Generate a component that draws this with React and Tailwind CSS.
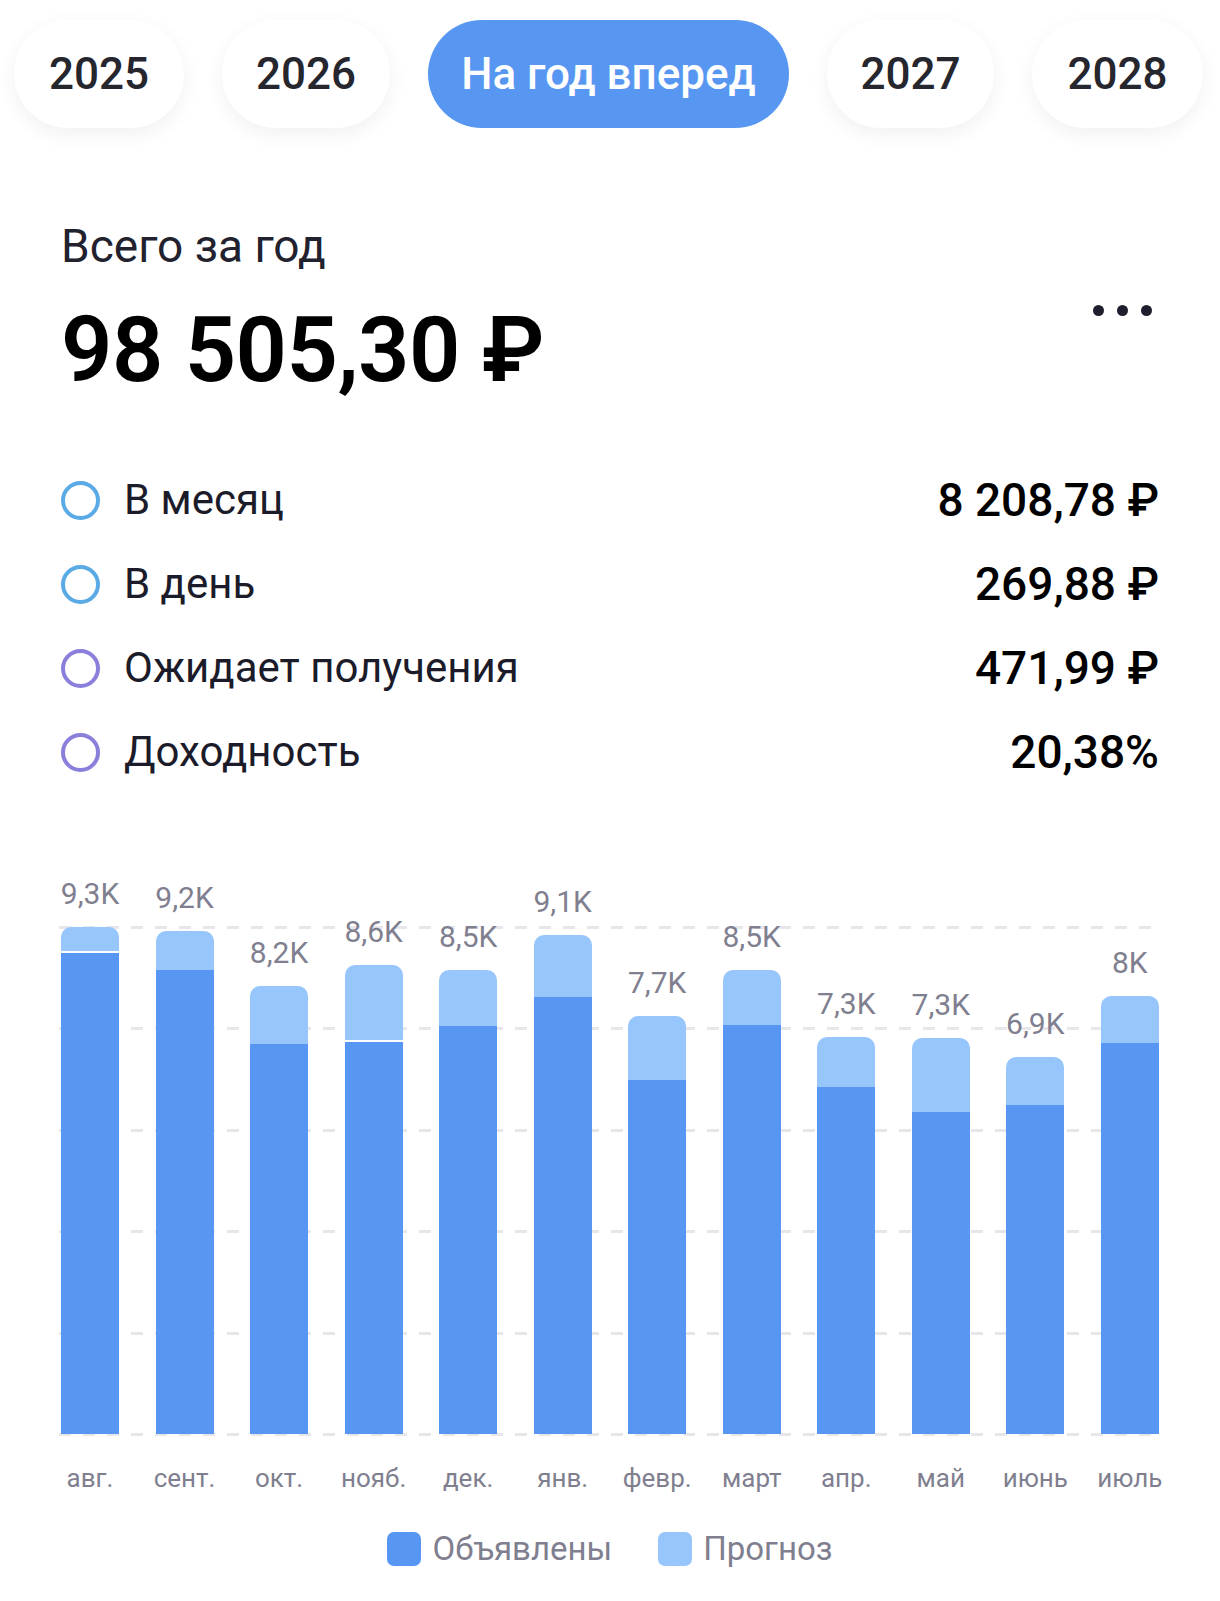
import React from 'react';

const tabs = [
  { label: '2025', w: 'w-[170px]' },
  { label: '2026', w: 'w-[168px]' },
  { label: 'На год вперед', w: 'w-[361px]', active: true },
  { label: '2027', w: 'w-[167px]' },
  { label: '2028', w: 'w-[171px]' },
];

const stats = [
  { label: 'В месяц', value: '8 208,78 ₽', ring: 'border-[#5aaae6]' },
  { label: 'В день', value: '269,88 ₽', ring: 'border-[#5aaae6]' },
  { label: 'Ожидает получения', value: '471,99 ₽', ring: 'border-[#8a80db]' },
  { label: 'Доходность', value: '20,38%', ring: 'border-[#8a80db]' },
];

// heights in px: total bar, declared part
const months = [
  { m: 'авг.', v: '9,3K', total: 507, dark: 483, split: true },
  { m: 'сент.', v: '9,2K', total: 503, dark: 464 },
  { m: 'окт.', v: '8,2K', total: 448, dark: 390 },
  { m: 'нояб.', v: '8,6K', total: 469, dark: 394, split: true },
  { m: 'дек.', v: '8,5K', total: 464, dark: 408 },
  { m: 'янв.', v: '9,1K', total: 499, dark: 437 },
  { m: 'февр.', v: '7,7K', total: 418, dark: 354 },
  { m: 'март', v: '8,5K', total: 464, dark: 409 },
  { m: 'апр.', v: '7,3K', total: 397, dark: 347 },
  { m: 'май', v: '7,3K', total: 396, dark: 322 },
  { m: 'июнь', v: '6,9K', total: 377, dark: 329 },
  { m: 'июль', v: '8K', total: 438, dark: 391 },
];

function Bar({ d }) {
  return (
    <div className="w-[58px] flex flex-col items-center">
      <div className="whitespace-nowrap text-[30px] leading-[36px] text-[#7f7f90] mb-[15px]">{d.v}</div>
      <div className="w-full flex flex-col rounded-t-[10px] overflow-hidden">
        <div className="bg-[#96c6fb]" style={{ height: d.total - d.dark }} />
        <div
          className={d.split ? 'bg-[#5796f3] border-t-2 border-white' : 'bg-[#5796f3]'}
          style={{ height: d.dark }}
        />
      </div>
    </div>
  );
}

export default function App() {
  return (
    <div className="w-[1220px] min-h-[1601px] bg-white font-['Roboto',sans-serif] text-[#1b1b2a]">
      {/* Year tabs */}
      <div className="flex gap-[38px] pt-[20px] pl-[14px]">
        {tabs.map((t) => (
          <div
            key={t.label}
            className={
              t.active
                ? `${t.w} h-[108px] rounded-full bg-[#5797f1] text-white flex items-center justify-center text-[44px] font-medium`
                : `${t.w} h-[108px] rounded-full bg-white text-[#26262e] flex items-center justify-center text-[44px] font-medium shadow-[0_6px_20px_rgba(0,0,0,0.06)]`
            }
          >
            {t.label}
          </div>
        ))}
      </div>

      <div className="px-[61px]">
        {/* Total */}
        <div className="mt-[94px] text-[46px] leading-[48px] text-[#22222e]">Всего за год</div>
        <div className="mt-[31px] flex items-start justify-between">
          <div className="text-[90px] leading-[100px] font-semibold text-black tracking-[-0.5px]">98 505,30 ₽</div>
          <div className="flex gap-[13px] mt-[4px] mr-[7px]">
            <span className="w-[11px] h-[11px] rounded-full bg-[#1e1e2e]" />
            <span className="w-[11px] h-[11px] rounded-full bg-[#1e1e2e]" />
            <span className="w-[11px] h-[11px] rounded-full bg-[#1e1e2e]" />
          </div>
        </div>

        {/* Stats */}
        <div className="mt-[57px] flex flex-col">
          {stats.map((s) => (
            <div key={s.label} className="h-[84px] flex items-center justify-between">
              <div className="flex items-center gap-[24px]">
                <span className={`w-[39px] h-[39px] rounded-full border-4 ${s.ring}`} />
                <span className="text-[42px] leading-[50px]">{s.label}</span>
              </div>
              <span className="text-[46px] leading-[50px] font-medium text-black">{s.value}</span>
            </div>
          ))}
        </div>

        {/* Chart */}
        <div className="relative mt-[56px]">
          <div className="absolute left-[-2px] right-[-2px] bottom-[-2px] h-[510px] flex flex-col justify-between">
            {[0, 1, 2, 3, 4, 5].map((i) => (
              <div
                key={i}
                className="h-[3px] bg-[repeating-linear-gradient(90deg,#e6e6eb_0_12px,transparent_12px_24px)]"
              />
            ))}
          </div>
          <div className="relative h-[584px] flex items-end justify-between">
            {months.map((d) => (
              <Bar key={d.m} d={d} />
            ))}
          </div>
        </div>

        <div className="mt-[28px] flex justify-between">
          {months.map((d) => (
            <div key={d.m} className="w-[58px] flex justify-center">
              <span className="whitespace-nowrap text-[26px] leading-[32px] text-[#7f7f90]">{d.m}</span>
            </div>
          ))}
        </div>

        {/* Legend */}
        <div className="mt-[33px] flex justify-center items-center gap-[46px]">
          <div className="flex items-center gap-[11px]">
            <span className="w-[34px] h-[34px] rounded-[7px] bg-[#5796f3]" />
            <span className="text-[33px] leading-[44px] text-[#7f7f90]">Объявлены</span>
          </div>
          <div className="flex items-center gap-[11px]">
            <span className="w-[34px] h-[34px] rounded-[7px] bg-[#96c6fb]" />
            <span className="text-[33px] leading-[44px] text-[#7f7f90]">Прогноз</span>
          </div>
        </div>
      </div>
    </div>
  );
}
